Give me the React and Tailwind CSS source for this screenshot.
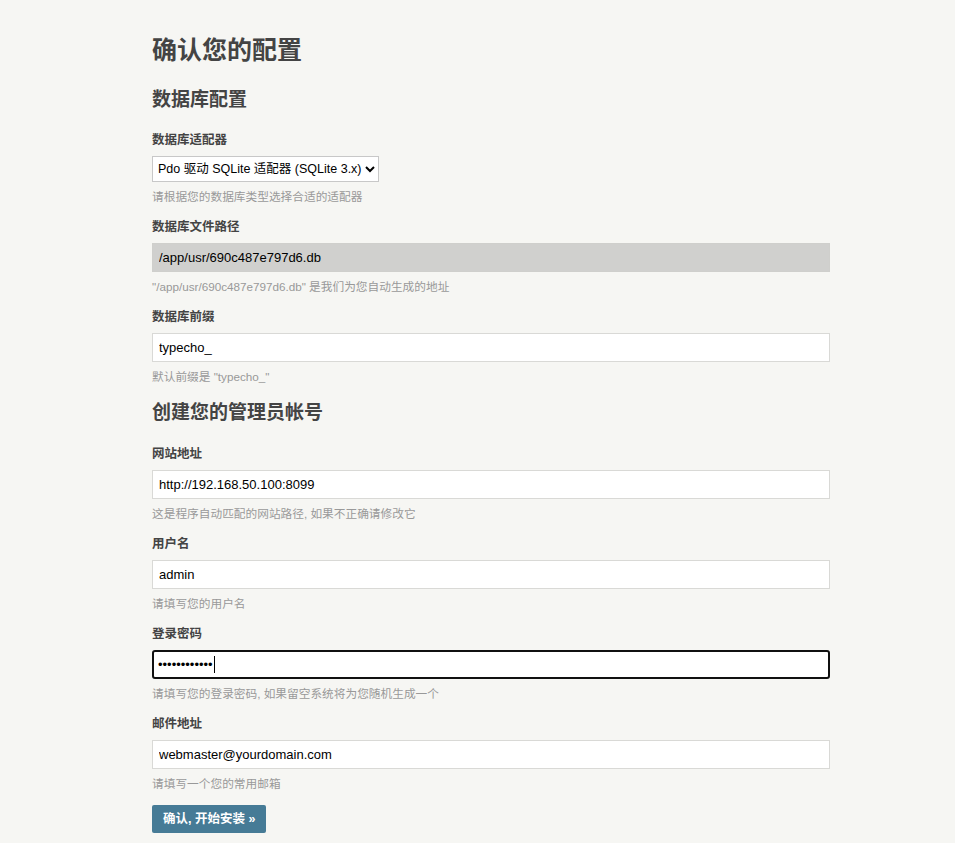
import React from 'react';

const font = { fontFamily: '"Liberation Sans", "Noto Sans CJK SC", sans-serif' };

const dbFields = [
  { label: '数据库文件路径', value: '/app/usr/690c487e797d6.db', readOnly: true, desc: '"/app/usr/690c487e797d6.db" 是我们为您自动生成的地址' },
  { label: '数据库前缀', value: 'typecho_', desc: '默认前缀是 "typecho_"' },
];

function Label({ children }) {
  return <label className="block h-5 text-[12.5px] leading-[22px] font-bold text-[#444] mb-[7px]">{children}</label>;
}

function Desc({ children }) {
  return <p className="h-5 text-[11.7px] leading-[22px] text-[#999] mt-1 mb-[10px]">{children}</p>;
}

function TextField({ label, value, readOnly, desc }) {
  return (
    <div>
      <Label>{label}</Label>
      <input
        type="text"
        readOnly
        value={value}
        className={`block w-full h-[29px] px-[6px] text-[13px] text-black border outline-none ${
          readOnly ? 'bg-[#d0d0ce] border-[#cfcfcc]' : 'bg-white border-[#d9d9d6]'
        }`}
      />
      <Desc>{desc}</Desc>
    </div>
  );
}

export default function App() {
  return (
    <div className="min-h-screen bg-[#f6f6f3] text-[#444]" style={font}>
      <div className="w-[678px] ml-[152px] pt-[32px] pb-[9px]">
        <h1 className="h-9 text-[25px] leading-9 font-bold">确认您的配置</h1>

        {/* database section */}
        <h2 className="h-7 mt-[18px] mb-[15px] text-[19px] leading-7 font-bold">数据库配置</h2>

        <div>
          <Label>数据库适配器</Label>
          <select
            defaultValue="sqlite"
            className="block h-[26px] pl-px text-[12.5px] text-black bg-white border border-[#c8c8c8]"
          >
            <option value="sqlite">Pdo 驱动 SQLite 适配器 (SQLite 3.x)</option>
          </select>
          <p className="h-5 text-[11.7px] leading-[22px] text-[#999] mt-[4px] mb-[10px]">请根据您的数据库类型选择合适的适配器</p>
        </div>

        {dbFields.map(f => <TextField key={f.label} {...f} />)}

        {/* admin account section */}
        <h2 className="h-7 mt-[13px] mb-[16px] text-[19px] leading-7 font-bold">创建您的管理员帐号</h2>

        <TextField label="网站地址" value="http://192.168.50.100:8099" desc="这是程序自动匹配的网站路径, 如果不正确请修改它" />
        <TextField label="用户名" value="admin" desc="请填写您的用户名" />

        <div>
          <Label>登录密码</Label>
          <div className="flex items-center w-full h-[29px] px-[4px] bg-white border-2 border-[#101010] rounded-[3px]">
            <span className="text-[13px] leading-none text-black">••••••••••••</span>
            <span className="ml-px w-px h-[17px] bg-black" />
          </div>
          <Desc>请填写您的登录密码, 如果留空系统将为您随机生成一个</Desc>
        </div>

        <TextField label="邮件地址" value="webmaster@yourdomain.com" desc="请填写一个您的常用邮箱" />

        <button className="mt-[2px] h-[28px] px-[11px] bg-[#467b96] text-white text-[12.5px] font-bold rounded-[2px]">
          确认, 开始安装 »
        </button>
      </div>
    </div>
  );
}
